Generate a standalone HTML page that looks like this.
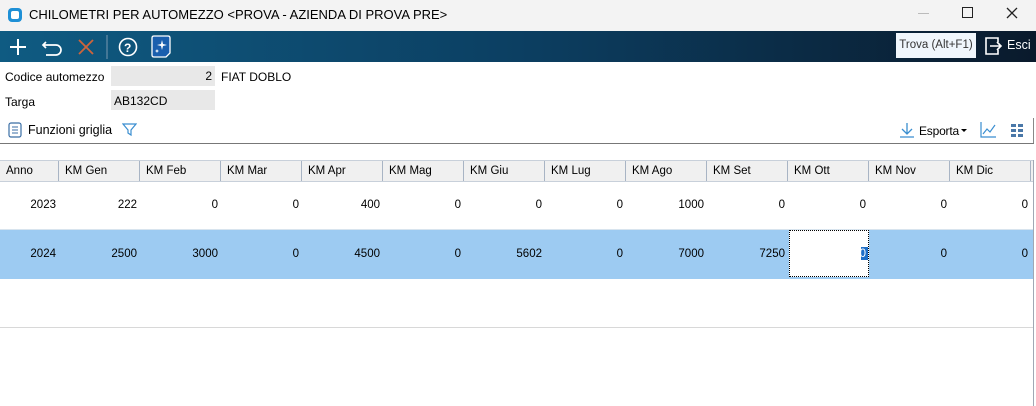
<!DOCTYPE html><html><head><style>
body{margin:0;width:1036px;height:406px;overflow:hidden;background:#fff;font-family:"Liberation Sans",sans-serif;font-size:12px;color:#000;position:relative}
.a{position:absolute}
.tb{top:0;left:0;width:1036px;height:31px;background:#f3f3f3}
.tool{top:31px;left:0;width:1036px;height:31px;background:linear-gradient(90deg,#0f5b82 0%,#0c3f62 50%,#0a1a2c 100%)}
.h{top:160px;height:20px;background:#f0f0f0;border-top:1px solid #c8d0da;border-bottom:1px solid #c8d0da}
.hc{top:161px;height:20px;line-height:20px;border-right:1px solid #a8b4c4;font-size:11.5px;padding-left:6px;box-sizing:border-box}
.c{height:48px;line-height:48px;text-align:right;font-size:11.5px;box-sizing:border-box;padding-right:3px}
</style></head><body>
<div class="a tb"></div>
<div class="a" style="left:8px;top:8px;width:14px;height:14px;background:#1e90d6;border-radius:4px"><div style="margin:3px;width:8px;height:8px;background:#fff;border-radius:2px"></div></div>
<div class="a" style="left:29px;top:7px;font-size:13px">CHILOMETRI PER AUTOMEZZO &lt;PROVA - AZIENDA DI PROVA PRE&gt;</div>
<div class="a" style="left:918px;top:13px;width:11px;border-top:1px solid #bbb"></div>
<div class="a" style="left:962px;top:7px;width:9px;height:9px;border:1.3px solid #222"></div>
<svg class="a" style="left:1006px;top:7px" width="12" height="12"><path d="M1 1L11 11M11 1L1 11" stroke="#222" stroke-width="1.3"/></svg>
<div class="a tool"></div>
<svg class="a" style="left:0;top:31px" width="180" height="31">
<path d="M18 8V24M10 16H26" stroke="#fff" stroke-width="2"/>
<path d="M46 11L43 14L46 17M43 14H56a5 5 0 0 1 0 10H46" stroke="#fff" stroke-width="1.7" fill="none"/>
<path d="M79 9L93 23M93 9L79 23" stroke="#d0643a" stroke-width="1.8"/>
<path d="M107 4V28" stroke="#7a99b0" stroke-width="1"/>
<circle cx="128" cy="16" r="8.5" stroke="#fff" stroke-width="1.6" fill="none"/>
<text x="124" y="21" fill="#fff" font-size="12" font-family="Liberation Sans" font-weight="bold">?</text>
<path d="M154 5H168Q170 5 170 7V22L166 26H154Q152 26 152 24V7Q152 5 154 5Z" fill="#1a5fae" stroke="#fff" stroke-width="1.3"/>
<path d="M162 9L163 13L167 14L163 15L162 19L161 15L157 14L161 13Z" fill="#fff"/>
<path d="M157 18L157.6 19.4L159 20L157.6 20.6L157 22L156.4 20.6L155 20L156.4 19.4Z" fill="#fff"/>
</svg>
<div class="a" style="left:896px;top:33px;width:80px;height:25px;background:#f0f6fc;color:#333;line-height:25px;text-align:center;font-size:11.5px">Trova (Alt+F1)</div>
<svg class="a" style="left:984px;top:36px" width="20" height="20"><path d="M8 2H2V18H8M2 2H14V6M14 14V18H2" stroke="#fff" stroke-width="1.6" fill="none"/><path d="M6 10H17M13 6L17 10L13 14" stroke="#fff" stroke-width="1.6" fill="none"/></svg>
<div class="a" style="left:1007px;top:38px;color:#fff;font-size:12.5px">Esci</div>
<div class="a" style="left:5px;top:70px">Codice automezzo</div>
<div class="a" style="left:111px;top:66px;width:104px;height:20px;background:#e8e8e8"><span style="position:absolute;right:3px;top:3px">2</span></div>
<div class="a" style="left:221px;top:70px">FIAT DOBLO</div>
<div class="a" style="left:5px;top:95px">Targa</div>
<div class="a" style="left:111px;top:90px;width:104px;height:20px;background:#e8e8e8"><span style="position:absolute;left:3px;top:4px">AB132CD</span></div>
<svg class="a" style="left:8px;top:122px" width="14" height="16"><rect x="1" y="1" width="12" height="14" rx="2" fill="none" stroke="#3a6ea5" stroke-width="1.2"/><path d="M4 5H10M4 8H10M4 11H10" stroke="#3a6ea5"/></svg>
<div class="a" style="left:28px;top:123px;font-size:12.5px">Funzioni griglia</div>
<svg class="a" style="left:122px;top:122px" width="15" height="15"><path d="M1 2H14L9 8V13L6 11V8Z" fill="none" stroke="#3a8ed0" stroke-width="1.2"/></svg>
<svg class="a" style="left:899px;top:122px" width="16" height="16"><path d="M8 1V12M3 7L8 12L13 7M1 15H15" stroke="#3a8ed0" stroke-width="1.3" fill="none"/></svg>
<div class="a" style="left:919px;top:124px;font-size:12px;letter-spacing:-0.2px">Esporta</div>
<div class="a" style="left:961px;top:129px;border:3px solid transparent;border-top:3px solid #000"></div>
<svg class="a" style="left:980px;top:121px" width="17" height="17"><path d="M1 1V16H16M3 13L7 8L10 11L15 4" stroke="#3a8ed0" stroke-width="1.2" fill="none"/></svg>
<svg class="a" style="left:1011px;top:124px" width="13" height="13" fill="#4a78a8"><rect x="0" y="0" width="5" height="3"/><rect x="7" y="0" width="5" height="3"/><rect x="0" y="5" width="5" height="3"/><rect x="7" y="5" width="5" height="3"/><rect x="0" y="10" width="5" height="3"/><rect x="7" y="10" width="5" height="3"/></svg>
<div class="a" style="left:1033px;top:118px;height:25px;border-left:1px solid #888"></div>
<div class="a" style="left:0;top:143px;width:1034px;border-top:1px solid #777"></div>
<div class="a h" style="left:0;width:1033px"></div>
<div class="a" style="left:1033px;top:160px;height:246px;border-left:1px solid #a0a8b4"></div>
<div class="a" style="left:0;top:229px;width:1033px;height:49px;background:#9dcbf2;border-top:1px solid #d8e4ee"></div>
<div class="a" style="left:0;top:327px;width:1033px;border-top:1px solid #d8d8d8"></div>
<div class="a" style="left:789px;top:230px;width:80px;height:47px;background:#fff;border:1px dotted #000;box-sizing:border-box"></div>
<div class="a" style="left:861px;top:247px;width:7px;height:13px;background:#1e6fc8"></div>
<div id="g"></div>
<script>
var H=["Anno","KM Gen","KM Feb","KM Mar","KM Apr","KM Mag","KM Giu","KM Lug","KM Ago","KM Set","KM Ott","KM Nov","KM Dic"];
var R1=["2023","222","0","0","400","0","0","0","1000","0","0","0","0"];
var R2=["2024","2500","3000","0","4500","0","5602","0","7000","7250","0","0","0"];
var s="";
for(var i=0;i<13;i++){var l=i==0?0:59+(i-1)*81,w=i==0?59:81;
s+='<div class="a hc" style="left:'+l+'px;width:'+w+'px">'+H[i]+'</div>';
s+='<div class="a c" style="left:'+l+'px;width:'+w+'px;top:181px">'+R1[i]+'</div>';
var t=R2[i];if(i==10)t='<span style="color:#fff">0</span>';
s+='<div class="a c" style="left:'+l+'px;width:'+w+'px;top:230px">'+t+'</div>';}
document.getElementById("g").innerHTML=s;
</script>
</body></html>
